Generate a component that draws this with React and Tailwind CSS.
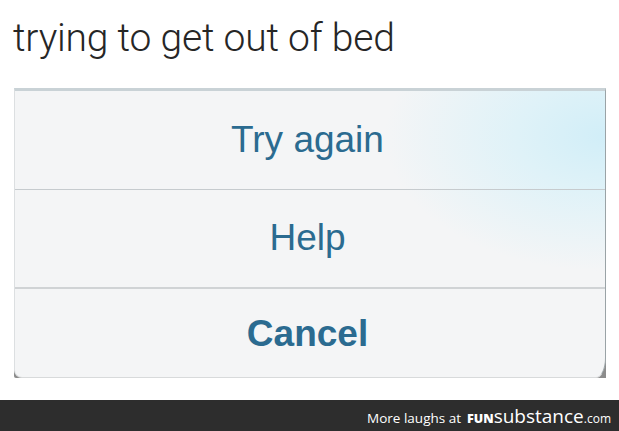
const options = [
  { label: 'Try again', weight: 'font-normal' },
  { label: 'Help', weight: 'font-normal' },
  { label: 'Cancel', weight: 'font-bold' },
]

const App = () => {
  return (
    <div className="w-[619px] h-[431px] bg-white flex flex-col overflow-hidden">
      <h1 className="pl-[13px] pt-[19px] h-[88px] text-[39px] leading-[39px] font-light text-[#262626] tracking-[-0.2px] font-['Roboto',sans-serif]">
        trying to get out of bed
      </h1>

      <div className="ml-[14px] w-[592px] h-[290px] bg-[#8c8c8c] rounded-bl-[2px]">
        <div className="h-full flex flex-col bg-[#f4f5f6] border-t-[3px] border-t-[#c9d2d6] border-l border-l-[#dcdfe1] border-r border-r-[#9aa3a6] border-b border-b-[#d8dadb] rounded-bl-[8px] rounded-br-[10px_20px] overflow-hidden font-['Liberation_Sans',Arial,sans-serif] text-[37px] text-[#2b6b90] bg-[radial-gradient(ellipse_220px_135px_at_590px_45px,#d1eef8_0%,#dff2f8_40%,#f4f5f6_100%)]">
          {options.map((option, i) => (
            <div
              key={option.label}
              className={
                'flex items-center justify-center ' +
                (i === 0
                  ? 'h-[98px]'
                  : i === 1
                  ? 'h-[98px] border-t border-t-[#c6cbce]'
                  : 'flex-1 border-t-2 border-t-[#d0d3d5]')
              }
            >
              <span className={option.weight + (i === 2 ? ' pt-[2px] mr-[5px]' : ' pb-[1px] mr-[5px]')}>{option.label}</span>
            </div>
          ))}
        </div>
      </div>

      <div className="mt-auto h-[31px] bg-[#2d2d2d] flex items-baseline justify-end pr-[8px] pt-[4px] text-white font-['Open_Sans',sans-serif]">
        <span className="text-[13.5px] leading-[24px] mr-[6px]">More laughs at</span>
        <span className="text-[12.5px] leading-[24px] font-extrabold">FUN</span>
        <span className="text-[19px] leading-[24px]">substance</span>
        <span className="text-[12px] leading-[24px]">.com</span>
      </div>
    </div>
  )
}

export default App
